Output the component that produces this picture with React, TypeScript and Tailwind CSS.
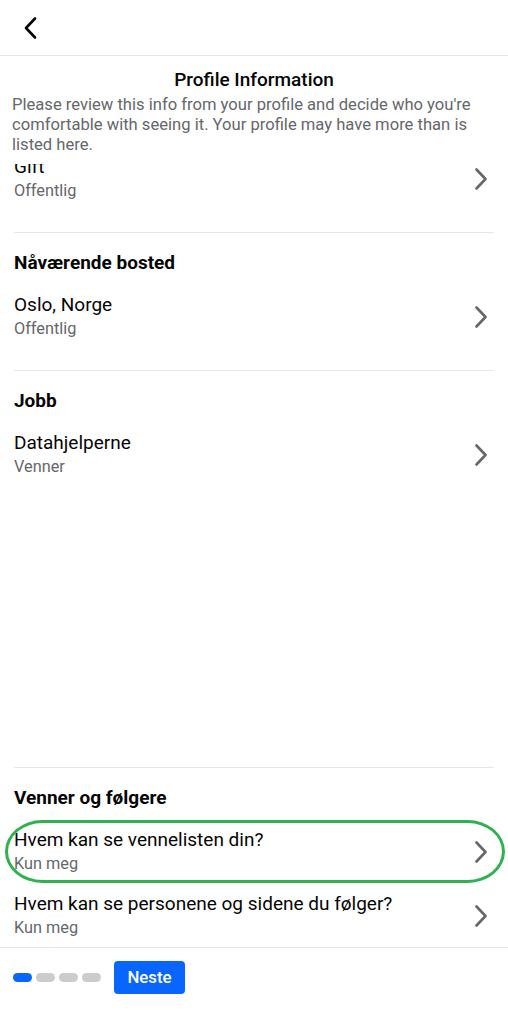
import React from "react";

const Chevron = () => (
  <svg width="16" height="22" viewBox="0 0 16 22" fill="none" className="shrink-0">
    <path d="M3.5 1.5 L12.5 11 L3.5 20.5" stroke="#65676b" strokeWidth="2.6" strokeLinecap="round" strokeLinejoin="round" />
  </svg>
);

type Item = { title: string; sub: string; highlight?: boolean };

const Row = ({ item }: { item: Item }) => (
  <div className="relative flex items-center justify-between pt-[9px] pb-[7px]">
    <div className="flex flex-col">
      <div className="text-[19px] leading-[24px] text-[#050505]">{item.title}</div>
      <div className="text-[16.3px] leading-[24px] text-[#65676b]">{item.sub}</div>
    </div>
    <div className="pr-[5px]">
      <Chevron />
    </div>
    {item.highlight && (
      <div className="pointer-events-none absolute left-[-9px] right-[-11px] top-[1px] bottom-0 rounded-[38px/32px] border-[3px] border-[#2db24f]" />
    )}
  </div>
);

const Section = ({
  heading,
  items,
  border = true,
  extra = "pb-[22px]",
}: {
  heading?: string;
  items: Item[];
  border?: boolean;
  extra?: string;
}) => (
  <div className={`${border ? "border-t border-[#e4e6eb]" : ""} ${extra}`}>
    {heading && (
      <div className="pt-[19px] mb-[10px] text-[19px] leading-[22px] font-bold text-[#050505]">{heading}</div>
    )}
    {items.map((it, i) => (
      <Row key={i} item={it} />
    ))}
  </div>
);

export default function App() {
  return (
    <div
      className="flex h-[1024px] w-full flex-col overflow-hidden bg-white"
      style={{ fontFamily: "Roboto, 'Liberation Sans', sans-serif" }}
    >
      <div className="flex h-[56px] shrink-0 items-center border-b border-[#e4e6eb] pl-[22px]">
        <svg width="18" height="24" viewBox="0 0 18 24" fill="none">
          <path d="M13 2.5 L4 12 L13 21.5" stroke="#050505" strokeWidth="2.6" strokeLinecap="round" strokeLinejoin="round" />
        </svg>
      </div>
      <div className="shrink-0 px-3 pt-[12px] pb-[9px]">
        <div className="text-center text-[19px] leading-[24px] font-medium text-[#050505]">Profile Information</div>
        <p className="mt-[3px] text-[16.6px] leading-[20px] text-[#65676b]">
          Please review this info from your profile and decide who you're comfortable with seeing it. Your profile may have more than is listed here.
        </p>
      </div>
      <div className="flex-1 overflow-hidden">
        <div className="-mt-[18px] px-[14px]">
          <Section border={false} items={[{ title: "Gift", sub: "Offentlig" }]} />
          <Section heading="Nåværende bosted" items={[{ title: "Oslo, Norge", sub: "Offentlig" }]} />
          <Section heading="Jobb" items={[{ title: "Datahjelperne", sub: "Venner" }]} extra="pb-[281px]" />
          <Section
            heading="Venner og følgere"
            items={[
              { title: "Hvem kan se vennelisten din?", sub: "Kun meg", highlight: true },
              { title: "Hvem kan se personene og sidene du følger?", sub: "Kun meg" },
            ]}
          />
        </div>
      </div>
      <div className="h-[77px] shrink-0 border-t border-[#e4e6eb] pt-[13px] pl-[13px]">
        <div className="flex items-center">
          <div className="flex items-center gap-[4px]">
            <div className="h-[9px] w-[19px] rounded-full bg-[#0866ff]" />
            <div className="h-[9px] w-[19px] rounded-full bg-[#cccccc]" />
            <div className="h-[9px] w-[19px] rounded-full bg-[#cccccc]" />
            <div className="h-[9px] w-[19px] rounded-full bg-[#cccccc]" />
          </div>
          <div className="ml-[13px] flex h-[33px] w-[71px] items-center justify-center rounded-[4px] bg-[#0866ff] text-[16.8px] font-medium text-white">
            Neste
          </div>
        </div>
      </div>
    </div>
  );
}
